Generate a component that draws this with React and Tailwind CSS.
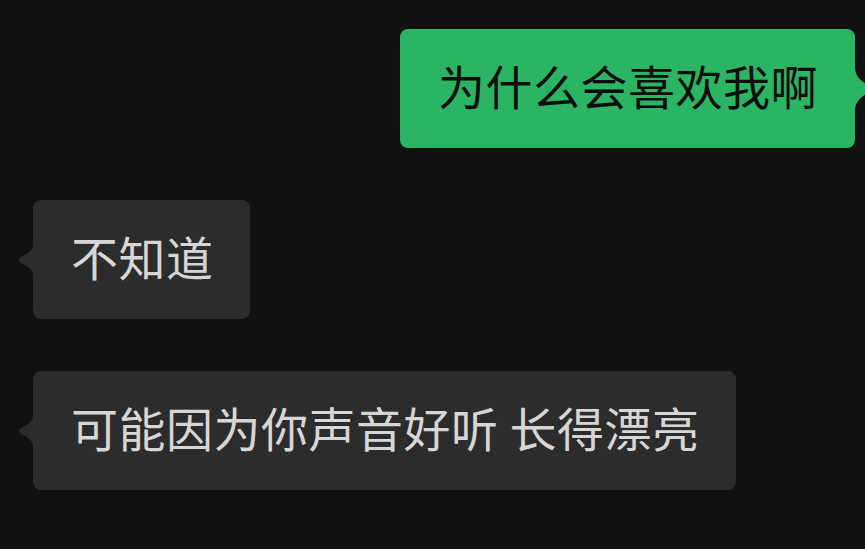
import React from "react";

const font = { fontFamily: '"Noto Sans CJK SC", "Noto Sans", sans-serif' };

function LeftTail() {
  return (
    <svg className="absolute left-[-16px] top-1/2 -translate-y-1/2" width="18" height="32" viewBox="0 0 18 32">
      <path d="M18 0 L16 0 C16 6 12 9 4 13 Q0 16 4 19 C12 23 16 26 16 32 L18 32 Z" fill="#2c2c2c" />
    </svg>
  );
}

function RightTail() {
  return (
    <svg className="absolute right-[-16px] top-1/2 -translate-y-1/2" width="18" height="44" viewBox="0 0 18 44">
      <path d="M0 0 L2 0 C2 8 6 12 14 18 Q18 22 14 26 C6 32 2 36 2 44 L0 44 Z" fill="#2bb463" />
    </svg>
  );
}

function Left({ text }) {
  return (
    <div className="flex pl-[33px]">
      <div className="relative rounded-[8px] bg-[#2c2c2c] pl-[38px] pr-[36px] pt-[32px] pb-[40px] text-[47px] leading-[47px] tracking-[0.5px] text-[#d6d6d6] whitespace-pre" style={font}>
        <LeftTail />
        {text}
      </div>
    </div>
  );
}

function Right({ text }) {
  return (
    <div className="flex justify-end pr-[10px]">
      <div className="relative rounded-[8px] bg-[#2bb463] pl-[38px] pr-[37px] pt-[32px] pb-[40px] text-[47px] leading-[47px] tracking-[0.5px] text-[#0d0d0d] whitespace-pre" style={font}>
        <RightTail />
        {text}
      </div>
    </div>
  );
}

export default function App() {
  return (
    <div className="w-[865px] h-[549px] overflow-hidden bg-[#111111] pt-[29px] flex flex-col gap-[52px]">
      <Right text="为什么会喜欢我啊" />
      <Left text="不知道" />
      <Left text="可能因为你声音好听 长得漂亮" />
    </div>
  );
}
